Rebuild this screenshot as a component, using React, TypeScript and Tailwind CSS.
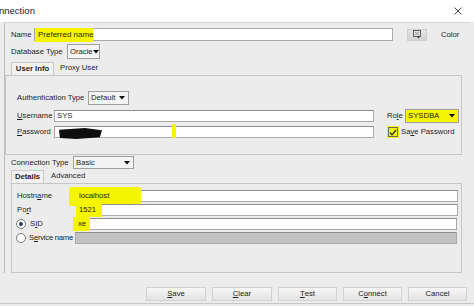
import React from "react";

const U = ({ c }: { c: string }) => <span className="underline underline-offset-[1px]">{c}</span>;

const Arrow = () => (
  <svg width="6" height="4" viewBox="0 0 6 4" className="shrink-0">
    <path d="M0 0 L6 0 L3 3.5 Z" fill="#111" />
  </svg>
);

const Select = ({ w, text, yellow, h = 14 }: { w: string; text: string; yellow?: boolean; h?: number }) => (
  <div
    className={`${w} shrink-0 flex items-center justify-between pl-[2px] pr-[3px] border border-[#9e9e9e] ${yellow ? "bg-[#f6f500]" : "bg-[#f4f4f4]"}`}
    style={{ height: h }}
  >
    <span>{text}</span>
    <Arrow />
  </div>
);

const Input = ({ w, children, gray }: { w: string; children?: React.ReactNode; gray?: boolean }) => (
  <div
    className={`${w} shrink-0 h-[12px] border border-[#a9a9a9] border-t-[#8e8e8e] relative flex items-center pl-[2px] ${gray ? "bg-[#c3c3c3]" : "bg-white"}`}
  >
    {children}
  </div>
);

const Btn = ({ children, w = "w-[59px]" }: { children: React.ReactNode; w?: string }) => (
  <div className={`${w} h-[14px] flex items-center justify-center border border-[#d2d2d2] bg-gradient-to-b from-[#f7f7f7] to-[#e3e3e3] text-[#222]`}>
    {children}
  </div>
);

export default function App() {
  return (
    <div className="w-[474px] h-[306px] bg-[#ececec] font-['Liberation_Sans',Arial,sans-serif] text-[7.7px] leading-none text-[#1e1e1e] overflow-hidden whitespace-nowrap">
      {/* title bar */}
      <div className="h-[22px] bg-white flex items-center justify-between pr-[12px]">
        <span className="text-[9.5px] text-[#222] -ml-[1px]">nnection</span>
        <svg width="8" height="8" viewBox="0 0 8 8">
          <path d="M0.5 0.5 L7.5 7.5 M7.5 0.5 L0.5 7.5" stroke="#333" strokeWidth="0.9" />
        </svg>
      </div>

      {/* outer frame */}
      <div className="ml-[4px] w-[466px] h-[251px] border-l border-t border-[#d4d4d4] border-l-[#bdbdbd] flex flex-col">
        {/* Name row */}
        <div className="mt-[5px] h-[13px] flex items-center">
          <span className="ml-[6px] w-[23px] shrink-0">Name</span>
          <div className="w-[359px] h-[13px] border border-[#a9a9a9] bg-white relative flex items-center">
            <div className="absolute left-[0px] top-[-1px] w-[58px] h-[14px] bg-[#f6f500]" />
            <span className="relative ml-[3px] text-[8px]">Preferred name</span>
          </div>
          <div className="ml-[14px] w-[20px] h-[12px] bg-gradient-to-b from-[#e4e4e4] to-[#d2d2d2] border border-[#cfcfcf] flex items-center justify-center">
            <svg width="9" height="9" viewBox="0 0 9 9">
              <rect x="0.5" y="0.5" width="7" height="6" fill="none" stroke="#444" strokeWidth="0.8" />
              <path d="M2 2 L6 5 M6 2 L2 5" stroke="#777" strokeWidth="0.6" />
              <path d="M4 6.5 L7 6.5 L5.5 8.5 Z" fill="#222" />
            </svg>
          </div>
          <span className="ml-[14px]">Color</span>
        </div>

        {/* Database Type */}
        <div className="mt-[3px] h-[15px] flex items-center">
          <span className="ml-[6px] w-[56px] shrink-0">Database Type</span>
          <Select w="w-[33px]" text="Oracle" h={15} />
        </div>

        {/* tabs */}
        <div className="mt-[4px] h-[12px] flex items-end">
          <div className="ml-[6px] w-[43px] h-[13px] bg-[#f2f2f2] border border-b-0 border-[#c9c9c9] flex items-center justify-center font-bold relative z-10">
            User Info
          </div>
          <span className="ml-[6px] mb-[3px]">Proxy User</span>
        </div>

        {/* user info panel */}
        <div className="w-[457px] h-[80px] border border-[#c6c6c6] bg-[#ececec] flex flex-col">
          <div className="mt-[15px] h-[14px] flex items-center">
            <span className="ml-[11px] w-[71px] shrink-0">Authentication Type</span>
            <Select w="w-[41px]" text="Default" />
          </div>
          <div className="mt-[4px] h-[14px] flex items-center">
            <span className="ml-[11px] w-[37px] shrink-0"><U c="U" />sername</span>
            <Input w="w-[320px]"><span>SYS</span></Input>
            <span className="ml-[13px] w-[18px] shrink-0">Ro<U c="l" />e</span>
            <Select w="w-[54px]" text="SYSDBA" yellow />
          </div>
          <div className="mt-[2px] h-[14px] flex items-center">
            <span className="ml-[11px] w-[37px] shrink-0"><U c="P" />assword</span>
            <Input w="w-[320px]">
              <div className="absolute left-[4px] top-[1px] w-[43px] h-[11px] bg-[#0e0e0e] rounded-[3px] [clip-path:polygon(0_15%,60%_0,100%_20%,95%_85%,40%_100%,2%_90%)]" />
              <div className="absolute left-[117px] top-[-3px] w-[4px] h-[14px] bg-[#f6f500] rounded-[1px]" />
            </Input>
            <div className="ml-[13px] w-[12px] h-[12px] bg-[#f6f500] flex items-center justify-center shrink-0">
              <div className="w-[10px] h-[10px] border border-[#6b6b6b] flex items-center justify-center">
                <svg width="8" height="7" viewBox="0 0 8 7">
                  <path d="M1 3.5 L3 5.8 L7 1" fill="none" stroke="#222" strokeWidth="1.2" />
                </svg>
              </div>
            </div>
            <span className="ml-[2px]">Sa<U c="v" />e Password</span>
          </div>
        </div>

        {/* Connection Type */}
        <div className="mt-[1px] h-[13px] flex items-center">
          <span className="ml-[6px] w-[62px] shrink-0">Connection Type</span>
          <Select w="w-[61px]" text="Basic" h={13} />
        </div>

        {/* details tabs */}
        <div className="mt-[2px] h-[12px] flex items-end">
          <div className="ml-[6px] w-[33px] h-[13px] bg-[#f2f2f2] border border-b-0 border-[#c9c9c9] flex items-center justify-center font-bold relative z-10">
            Details
          </div>
          <span className="ml-[7px] mb-[3px]">Advanced</span>
        </div>

        {/* details panel */}
        <div className="ml-[6px] w-[451px] h-[90px] border border-[#c6c6c6] flex flex-col gap-[2px] pt-[6px]">
          <div className="h-[12px] flex items-center">
            <span className="ml-[5px] w-[59px] shrink-0">Hostn<U c="a" />me</span>
            <Input w="w-[382px]">
              <div className="absolute left-[-8px] top-[-4px] w-[72px] h-[19px] bg-[#f6f500] rounded-[3px]" />
              <span className="relative">localhost</span>
            </Input>
          </div>
          <div className="h-[12px] flex items-center">
            <span className="ml-[5px] w-[59px] shrink-0">Po<U c="r" />t</span>
            <Input w="w-[382px]">
              <div className="absolute left-[-1px] top-[-1px] w-[26px] h-[13px] bg-[#f6f500]" />
              <span className="relative">1521</span>
            </Input>
          </div>
          <div className="h-[12px] flex items-center">
            <div className="ml-[4px] w-[10px] h-[10px] shrink-0 rounded-full border border-[#7a7a7a] bg-white flex items-center justify-center">
              <div className="w-[4px] h-[4px] rounded-full bg-[#2a3a5a]" />
            </div>
            <span className="ml-[4px] w-[45px] shrink-0">S<U c="I" />D</span>
            <Input w="w-[382px]">
              <div className="absolute left-[-3px] top-[-2px] w-[17px] h-[14px] bg-[#f6f500]" />
              <span className="relative">xe</span>
            </Input>
          </div>
          <div className="h-[12px] flex items-center">
            <div className="ml-[4px] w-[10px] h-[10px] shrink-0 rounded-full border border-[#7a7a7a] bg-white" />
            <span className="ml-[3px] w-[46px] shrink-0 tracking-[-0.25px]">S<U c="e" />rvice name</span>
            <Input w="w-[382px]" gray />
          </div>
        </div>
      </div>

      {/* buttons */}
      <div className="mt-[14px] h-[14px] flex items-center justify-end gap-[6px] pr-[7px]">
        <Btn w="w-[60px]"><U c="S" />ave</Btn>
        <Btn w="w-[60px]"><U c="C" />lear</Btn>
        <Btn><U c="T" />est</Btn>
        <Btn>C<U c="o" />nnect</Btn>
        <Btn>Cancel</Btn>
      </div>
      <div className="mt-[2px] h-[1px] bg-[#c8c8c8]" />
    </div>
  );
}
